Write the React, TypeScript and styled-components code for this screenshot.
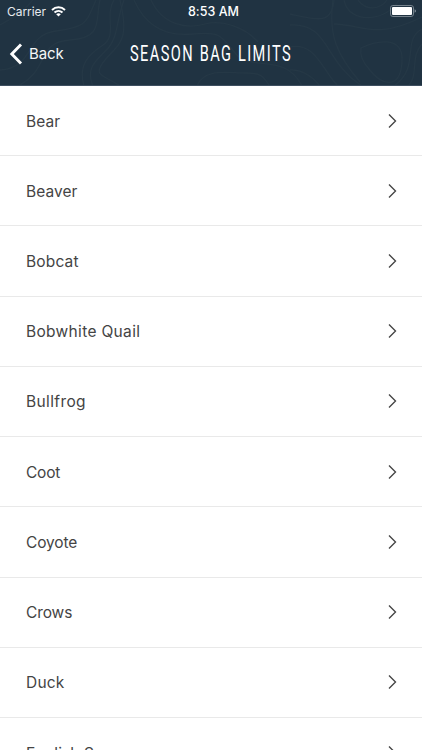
import React from "react";
import styled, { createGlobalStyle } from "styled-components";

const GlobalStyle = createGlobalStyle`
  * { box-sizing: border-box; }
  html, body { margin: 0; padding: 0; }
  body { background: #fff; overflow: hidden; }
`;

const Screen = styled.div`
  width: 422px;
  height: 750px;
  overflow: hidden;
  background: #fff;
  font-family: Inter, sans-serif;
`;

const Header = styled.header`
  position: relative;
  height: 86px;
  background: #203342;
  color: #fff;
  border-bottom: 1px solid #3e4f60;
`;

const Contours = styled.svg`
  position: absolute;
  inset: 0;
`;

const StatusBar = styled.div`
  position: relative;
  display: grid;
  grid-template-columns: 1fr auto 1fr;
  align-items: center;
  height: 22px;
  padding: 0 6px 0 7px;
  font-family: Inter, sans-serif;
`;

const Carrier = styled.div`
  display: flex;
  align-items: center;
  gap: 5px;
  font-size: 12px;
  letter-spacing: -0.05px;
  color: #e6eaee;
`;

const Clock = styled.div`
  font-size: 12.5px;
  font-weight: 500;
  letter-spacing: 0.05px;
  padding-left: 4px;
`;

const Battery = styled.svg`
  justify-self: end;
`;

const NavBar = styled.div`
  position: relative;
  display: grid;
  grid-template-columns: 1fr 162px 1fr;
  align-items: center;
  height: 64px;
`;

const BackButton = styled.button`
  display: flex;
  align-items: center;
  gap: 6px;
  padding: 0 0 0 9px;
  border: 0;
  background: none;
  color: #f5f7f8;
  font: 400 15px/22px Inter, sans-serif;
  letter-spacing: -0.1px;
`;

const Title = styled.h1`
  margin: 0;
  font: 400 21.5px/30px Roboto, sans-serif;
  letter-spacing: 2.1px;
  word-spacing: 0.8px;
  white-space: nowrap;
  transform: scaleX(0.678);
  transform-origin: 0 50%;
`;

const List = styled.ul`
  margin: 0;
  padding: 0;
  list-style: none;
`;

const Row = styled.li`
  display: flex;
  align-items: center;
  justify-content: space-between;
  height: 70.22px;
  padding: 0 25px 0 26px;
  border-bottom: 1px solid #e9e9e9;
`;

const Label = styled.span<{ $spacing: number }>`
  color: #444;
  padding-top: 2px;
  font-size: 15.5px;
  line-height: 22px;
  letter-spacing: ${(p) => p.$spacing}px;
`;

const species = [
  { name: "Bear", spacing: 0.1 },
  { name: "Beaver", spacing: 0.05 },
  { name: "Bobcat", spacing: 0.15 },
  { name: "Bobwhite Quail", spacing: 0.32 },
  { name: "Bullfrog", spacing: 0.38 },
  { name: "Coot", spacing: -0.2 },
  { name: "Coyote", spacing: -0.12 },
  { name: "Crows", spacing: -0.1 },
  { name: "Duck", spacing: 0.2 },
  { name: "English Sparrow", spacing: 0.1 },
];

const contourPaths = [
  "M0 25 Q25 12 34 -2",
  "M0 70 C35 68 24 35 56 31 S86 22 96 0",
  "M18 86 C50 70 36 42 70 40 S95 20 100 0",
  "M84 86 C78 65 88 55 103 45 S104 16 114 0",
  "M93 86 C84 66 100 58 109 47 S116 22 124 0",
  "M120 86 C105 75 91 77 105 60 S130 42 120 0",
  "M134 0 C145 25 165 37 193 34 S221 36 236 54 S285 52 302 86",
  "M151 0 C163 26 188 29 205 24 S246 28 258 42",
  "M197 86 C204 68 226 73 246 73 S264 80 270 86",
  "M290 14 C317 20 332 25 334 0",
  "M290 25 C330 23 323 61 362 86",
  "M290 47 C316 42 322 70 338 86",
  "M290 70 Q306 69 320 86",
  "M344 0 C349 25 387 22 399 0",
  "M358 0 C366 11 380 10 387 0",
  "M333 0 C328 35 337 55 360 82",
  "M334 24 C365 25 375 40 422 17",
  "M361 48 C373 42 404 33 402 62 S381 85 369 69 Q359 58 361 48Z",
  "M422 29 C401 40 421 67 394 86",
  "M422 44 C410 56 419 76 408 86",
];

const Chevron = () => (
  <svg width="10" height="16" viewBox="0 0 10 16" fill="none">
    <path d="M2 1.5 8.5 8 2 14.5" stroke="#444" strokeWidth="1.35" />
  </svg>
);

export default function App() {
  return (
    <Screen>
      <GlobalStyle />
      <Header>
        <Contours width="422" height="85" fill="none" stroke="#253846" strokeWidth="1.3">
          {contourPaths.map((d) => (
            <path key={d} d={d} />
          ))}
        </Contours>
        <StatusBar>
          <Carrier>
            <span>Carrier</span>
            <svg width="15" height="11" viewBox="0 0 15 11" fill="none" stroke="#fff" strokeWidth="2">
              <path d="M1 3.9C4.7.4 10.3.4 14 3.9" />
              <path d="M3.5 6.5C5.8 4.4 9.2 4.4 11.5 6.5" />
              <path d="M5.2 8.3Q7.5 6.4 9.8 8.3L7.5 10.6Z" fill="#fff" stroke="none" />
            </svg>
          </Carrier>
          <Clock>8:53 AM</Clock>
          <Battery width="27" height="12" viewBox="0 0 27 12">
            <rect x="1.5" y=".5" width="23" height="11" rx="2.4" fill="none" stroke="#75828c" />
            <rect x="3" y="2" width="20" height="8" rx="1" fill="#fff" />
            <path d="M25.6 4.2Q27 5 27 6T25.6 7.8Z" fill="#82909a" />
          </Battery>
        </StatusBar>
        <NavBar>
          <BackButton>
            <svg width="14" height="22" viewBox="0 0 14 22" fill="none">
              <path d="M12 1.5 2.8 11 12 20.5" stroke="#fff" strokeWidth="2.9" />
            </svg>
            Back
          </BackButton>
          <Title>SEASON BAG LIMITS</Title>
        </NavBar>
      </Header>
      <List>
        {species.map((s) => (
          <Row key={s.name}>
            <Label $spacing={s.spacing}>{s.name}</Label>
            <Chevron />
          </Row>
        ))}
      </List>
    </Screen>
  );
}
